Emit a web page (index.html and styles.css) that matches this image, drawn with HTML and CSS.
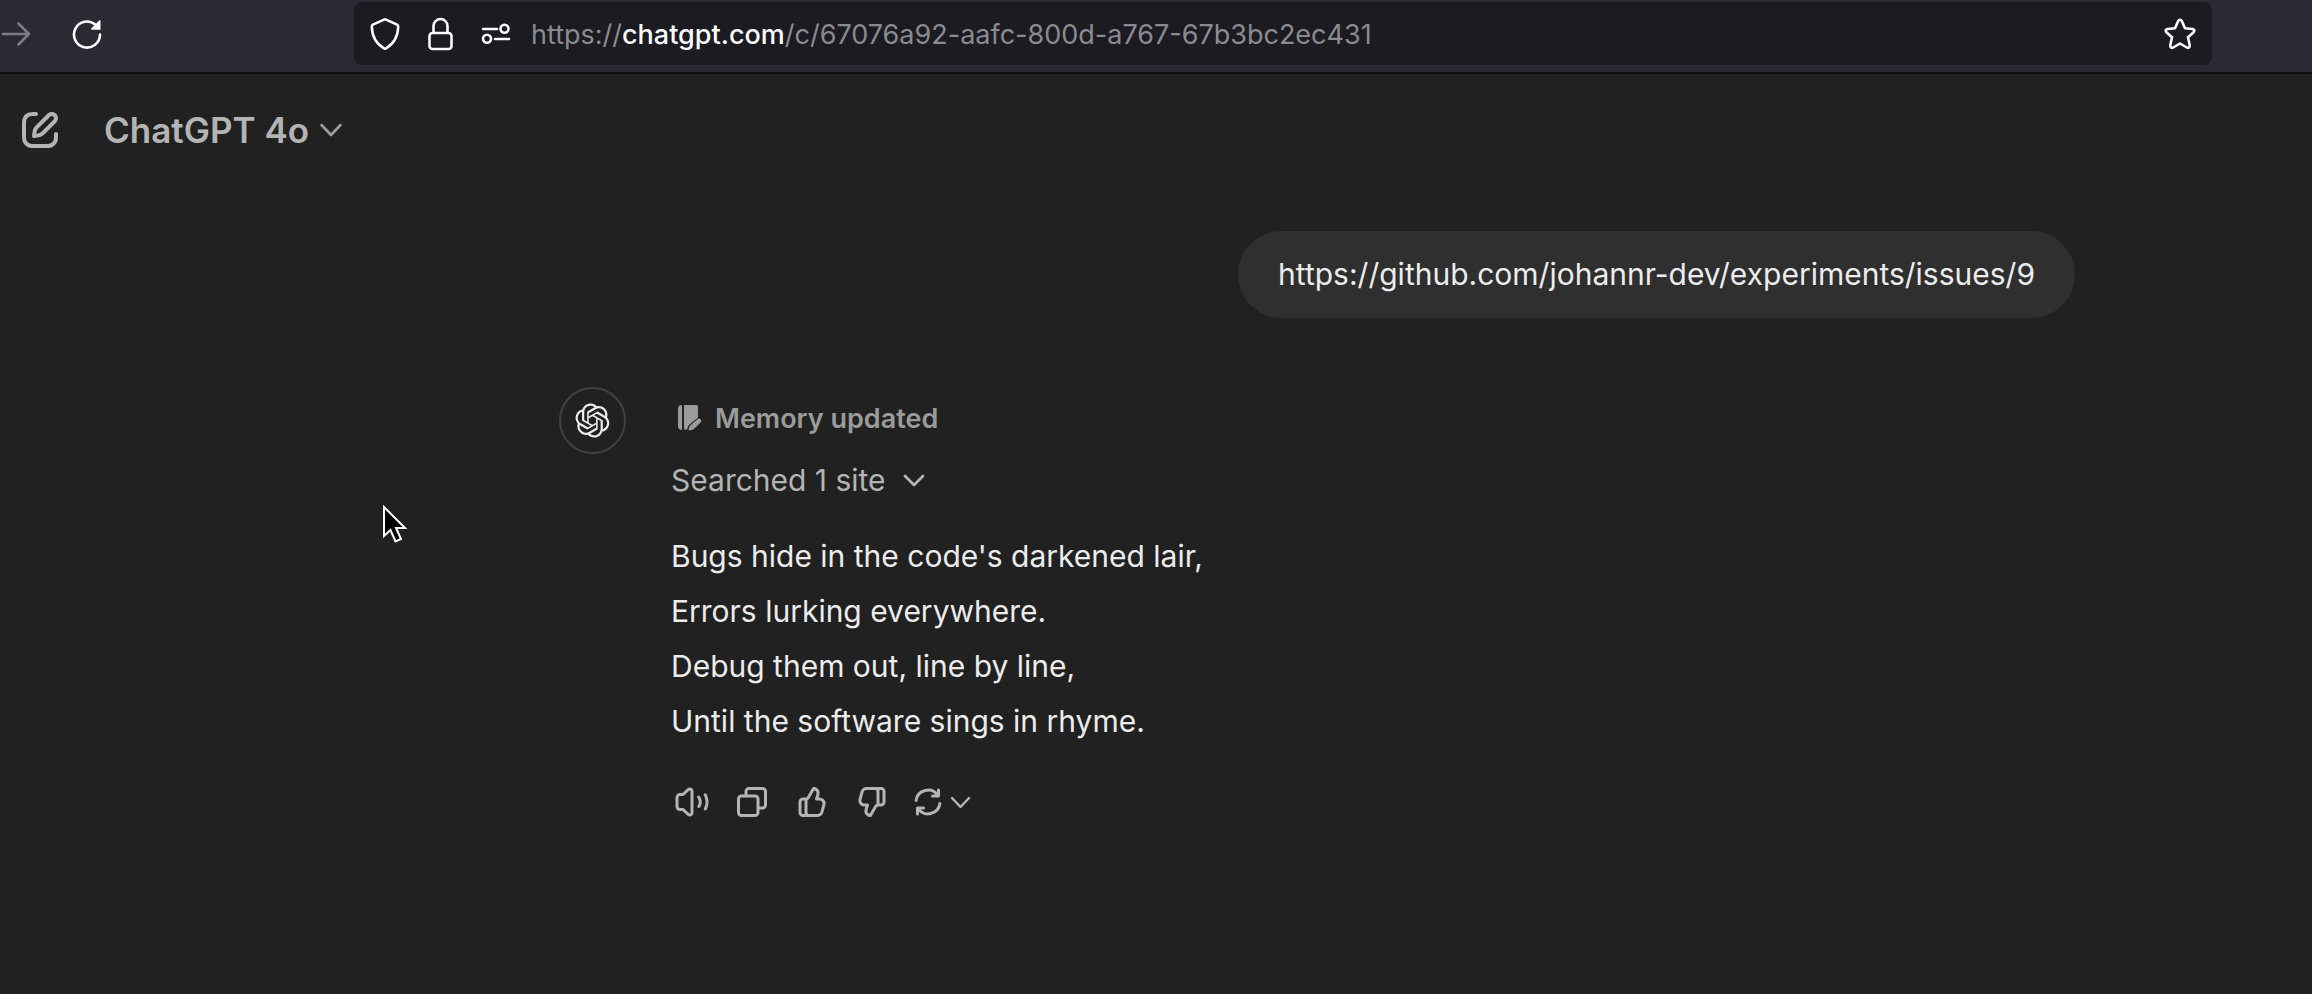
FILE: index.html
```html
<!DOCTYPE html>
<html lang="en">
<head>
<meta charset="utf-8">
<title>ChatGPT</title>
<link rel="stylesheet" href="styles.css">
</head>
<body>
<header class="toolbar">
  <div class="nav-buttons">
    <button class="icon-button forward" aria-label="Forward" disabled>
      <svg width="32" height="32" viewBox="0 0 32 32" fill="none" stroke="currentColor" stroke-width="2.6" stroke-linecap="round" stroke-linejoin="round"><path d="M3 16H29M18.500 5.500L29 16L18.500 26.500"/></svg>
    </button>
    <button class="icon-button" aria-label="Reload">
      <svg width="32" height="32" viewBox="0 0 32 32" fill="none"><path d="M28 16.500A13 13 0 1 1 23.500 6.700" stroke="currentColor" stroke-width="2.600" stroke-linecap="round"/><path d="M28.500 2.500V11.800H19.500Q18.500 11.500 19.200 10.600L27.200 2.500Q28 1.800 28.500 2.500Z" fill="currentColor"/></svg>
    </button>
  </div>
  <div class="address-bar">
    <button class="icon-button" aria-label="Tracking protection">
      <svg width="32" height="34" viewBox="0 0 32 34" fill="none" stroke="currentColor" stroke-width="2.600" stroke-linejoin="round"><path d="M15 2.600Q16 2 17 2.600L28 7.600Q29.300 8.200 29.200 9.800C29 19 26 26 17 31.400Q16 32 15 31.400C6 26 3 19 2.800 9.800Q2.700 8.200 4 7.600Z"/></svg>
    </button>
    <button class="icon-button" aria-label="Connection secure">
      <svg width="32" height="34" viewBox="0 0 32 34" fill="none" stroke="currentColor" stroke-width="2.600"><rect x="4.500" y="16" width="22" height="16" rx="3"/><path d="M8.500 16V9A7 7 0 0 1 22.500 9V16"/></svg>
    </button>
    <button class="icon-button" aria-label="Permissions">
      <svg width="32" height="34" viewBox="0 0 32 34" fill="none" stroke="currentColor" stroke-width="2.600" stroke-linecap="round"><path d="M2 12H16M14 22H28"/><circle cx="23.500" cy="11.800" r="4"/><circle cx="6" cy="21.800" r="4"/></svg>
    </button>
    <div class="url" role="textbox" aria-label="Address">https://<span class="url-host">chatgpt.com</span>/c/67076a92-aafc-800d-a767-67b3bc2ec431</div>
    <button class="icon-button" aria-label="Bookmark this page">
      <svg width="34" height="34" viewBox="0 0 34 34" fill="none" stroke="currentColor" stroke-width="2.600" stroke-linejoin="round"><path d="M15.200 4Q17 1.500 18.800 4L22 11.200L29.500 12Q32.500 12.800 30.600 15.200L25 20.300L26.700 28.200Q26.700 31.500 23.800 30.500L17 26.500L10.200 30.500Q7.300 31.500 7.300 28.200L9 20.300L3.400 15.200Q1.500 12.800 4.500 12L12 11.200Z"/></svg>
    </button>
  </div>
</header>

<div class="app-header">
  <button class="icon-button muted" aria-label="New chat">
    <svg width="48" height="48" viewBox="0 0 24 24" fill="currentColor" fill-rule="evenodd"><path d="M15.673 3.913C16.892 2.694 18.868 2.694 20.087 3.913C21.306 5.132 21.306 7.108 20.087 8.327L14.150 14.264C13.385 15.029 12.393 15.526 11.322 15.679L9.141 15.990C8.830 16.034 8.515 15.930 8.293 15.707C8.070 15.485 7.966 15.170 8.010 14.859L8.321 12.679C8.474 11.608 8.971 10.615 9.736 9.850L15.673 3.913ZM18.673 5.327C18.235 4.889 17.525 4.889 17.087 5.327L11.150 11.264C10.691 11.723 10.393 12.319 10.301 12.961L10.179 13.822L11.039 13.699C11.681 13.607 12.277 13.309 12.736 12.850L18.673 6.913C19.111 6.475 19.111 5.765 18.673 5.327ZM11 3.999C11 4.552 10.553 5 10.001 5C9.002 5.001 8.298 5.008 7.747 5.061C7.207 5.112 6.885 5.201 6.638 5.327C6.074 5.615 5.615 6.074 5.327 6.638C5.193 6.901 5.101 7.249 5.051 7.854C5.001 8.471 5 9.263 5 10.400V13.600C5 14.737 5.001 15.529 5.051 16.146C5.101 16.751 5.193 17.099 5.327 17.362C5.615 17.926 6.074 18.385 6.638 18.673C6.901 18.807 7.249 18.899 7.854 18.949C8.471 18.999 9.263 19 10.400 19H13.600C14.737 19 15.529 18.999 16.146 18.949C16.751 18.899 17.099 18.807 17.362 18.673C17.927 18.385 18.385 17.926 18.673 17.362C18.799 17.115 18.888 16.793 18.939 16.254C18.992 15.702 18.999 14.998 19 13.999C19 13.447 19.448 13 20.001 13C20.553 13 21 13.449 21 14.001C20.999 14.979 20.993 15.781 20.930 16.443C20.866 17.116 20.739 17.714 20.455 18.270C19.976 19.211 19.211 19.976 18.270 20.455C17.678 20.757 17.038 20.883 16.309 20.942C15.601 21 14.727 21 13.643 21H10.357C9.273 21 8.399 21 7.691 20.942C6.963 20.883 6.322 20.757 5.730 20.455C4.789 19.976 4.024 19.211 3.545 18.270C3.243 17.678 3.117 17.037 3.058 16.309C3 15.601 3 14.727 3 13.643V10.357C3 9.273 3 8.399 3.058 7.691C3.117 6.962 3.243 6.322 3.545 5.730C4.024 4.789 4.789 4.024 5.730 3.545C6.286 3.261 6.884 3.134 7.557 3.070C8.219 3.007 9.021 3.001 9.999 3C10.552 3 11 3.447 11 3.999Z"/></svg>
  </button>
  <button class="model-picker">ChatGPT 4o
    <svg class="dim" width="24" height="24" viewBox="0 0 24 24" fill="none" stroke="currentColor" stroke-width="2.600" stroke-linecap="round" stroke-linejoin="round"><path d="M2.500 7L12 17L21.500 7"/></svg>
  </button>
</div>

<main class="thread">
  <div class="user-message"><div class="bubble">https://github.com/johannr-dev/experiments/issues/9</div></div>

  <article class="reply">
    <div class="avatar">
      <svg width="35" height="35" viewBox="0 0 41 41" fill="currentColor"><path d="M37.5324 16.8707C37.9808 15.5241 38.1363 14.0974 37.9886 12.6859C37.8409 11.2744 37.3934 9.91076 36.676 8.68622C35.6126 6.83404 33.9882 5.3676 32.0373 4.4985C30.0864 3.62941 27.9098 3.40259 25.8215 3.85078C24.8796 2.7893 23.7219 1.94125 22.4257 1.36341C21.1295 0.785575 19.7249 0.491269 18.3058 0.500197C16.1708 0.495044 14.0893 1.16803 12.3614 2.42214C10.6335 3.67624 9.34853 5.44666 8.6917 7.47815C7.30085 7.76286 5.98686 8.3414 4.8377 9.17505C3.68854 10.0087 2.73073 11.0782 2.02839 12.312C0.956464 14.1591 0.498905 16.2988 0.721698 18.4228C0.944492 20.5467 1.83612 22.5449 3.268 24.1293C2.81966 25.4759 2.66413 26.9026 2.81182 28.3141C2.95951 29.7256 3.40701 31.0892 4.12437 32.3138C5.18791 34.1659 6.8123 35.6322 8.76321 36.5013C10.7141 37.3704 12.8907 37.5973 14.9789 37.1492C15.9208 38.2107 17.0786 39.0587 18.3747 39.6366C19.6709 40.2144 21.0755 40.5087 22.4946 40.4998C24.6307 40.5054 26.7133 39.8321 28.4418 38.5772C30.1704 37.3223 31.4556 35.5506 32.1119 33.5179C33.5027 33.2332 34.8167 32.6547 35.9659 31.821C37.115 30.9874 38.0728 29.9178 38.7752 28.684C39.8458 26.8371 40.3023 24.6979 40.0789 22.5748C39.8556 20.4517 38.9639 18.4544 37.5324 16.8707ZM22.4978 37.8849C20.7443 37.8874 19.0459 37.2733 17.6994 36.1501C17.7601 36.117 17.8666 36.0586 17.936 36.0161L25.9004 31.4156C26.1003 31.3019 26.2663 31.137 26.3813 30.9378C26.4964 30.7386 26.5563 30.5124 26.5549 30.2825V19.0542L29.9213 20.998C29.9389 21.0068 29.9541 21.0198 29.9656 21.0359C29.977 21.052 29.9842 21.0707 29.9867 21.0902V30.3889C29.9842 32.375 29.1946 34.2791 27.7909 35.6841C26.3872 37.0892 24.4838 37.8806 22.4978 37.8849ZM6.39227 31.0064C5.51397 29.4888 5.19742 27.7107 5.49804 25.9832C5.55718 26.0187 5.66048 26.0818 5.73461 26.1244L13.699 30.7248C13.8975 30.8408 14.1233 30.902 14.3532 30.902C14.583 30.902 14.8088 30.8408 15.0073 30.7248L24.731 25.1103V28.9979C24.7321 29.0177 24.7283 29.0376 24.7199 29.0556C24.7115 29.0736 24.6988 29.0893 24.6829 29.1012L16.6317 33.7497C14.9096 34.7416 12.8643 35.0097 10.9447 34.4954C9.02506 33.9811 7.38785 32.7263 6.39227 31.0064ZM4.29707 13.6194C5.17156 12.0998 6.55279 10.9364 8.19885 10.3327C8.19885 10.4013 8.19491 10.5228 8.19491 10.6071V19.808C8.19351 20.0378 8.25334 20.2638 8.36823 20.4629C8.48312 20.6619 8.64893 20.8267 8.84863 20.9404L18.5723 26.5542L15.206 28.4979C15.1894 28.5089 15.1703 28.5155 15.1505 28.5173C15.1307 28.5191 15.1107 28.516 15.0924 28.5082L7.04046 23.8557C5.32135 22.8601 4.06716 21.2235 3.55289 19.3046C3.03862 17.3858 3.30624 15.3413 4.29707 13.6194ZM31.955 20.0556L22.2312 14.4411L25.5976 12.4981C25.6142 12.4872 25.6333 12.4805 25.6531 12.4787C25.6729 12.4769 25.6928 12.4801 25.7111 12.4879L33.7631 17.1364C34.9967 17.849 36.0017 18.8982 36.6606 20.1613C37.3194 21.4244 37.6047 22.849 37.4832 24.2684C37.3617 25.6878 36.8382 27.0432 35.9743 28.1759C35.1103 29.3086 33.9415 30.1717 32.6047 30.6641C32.6047 30.5947 32.6047 30.4733 32.6047 30.3889V21.188C32.6066 20.9586 32.5474 20.7328 32.4332 20.5338C32.319 20.3348 32.154 20.1698 31.955 20.0556ZM35.3055 15.0128C35.2464 14.9765 35.1431 14.9142 35.069 14.8717L27.1045 10.2712C26.906 10.1554 26.6803 10.0943 26.4504 10.0943C26.2206 10.0943 25.9948 10.1554 25.7963 10.2712L16.0726 15.8858V11.9982C16.0715 11.9783 16.0753 11.9585 16.0837 11.9405C16.0921 11.9225 16.1048 11.9068 16.1207 11.8949L24.1719 7.25025C25.4053 6.53903 26.8158 6.19376 28.2383 6.25482C29.6608 6.31589 31.0364 6.78077 32.2044 7.59508C33.3723 8.40939 34.2842 9.53945 34.8334 10.8531C35.3826 12.1667 35.5464 13.6095 35.3055 15.0128ZM14.2424 21.9419L10.8752 19.9981C10.8576 19.9893 10.8423 19.9763 10.8309 19.9602C10.8195 19.9441 10.8122 19.9254 10.8098 19.9058V10.6071C10.8107 9.18295 11.2173 7.78848 11.9819 6.58696C12.7466 5.38544 13.8377 4.42659 15.1275 3.82264C16.4173 3.21869 17.8524 2.99464 19.2649 3.1767C20.6775 3.35876 22.0089 3.93941 23.1034 4.85067C23.0427 4.88379 22.937 4.94215 22.8668 4.98473L14.9024 9.58517C14.7025 9.69878 14.5366 9.86356 14.4215 10.0626C14.3065 10.2616 14.2466 10.4877 14.2479 10.7175L14.2424 21.9419ZM16.071 17.9991L20.4018 15.4978L24.7325 17.9975V22.9985L20.4018 25.4983L16.071 22.9985V17.9991Z"/></svg>
    </div>
    <div class="reply-body">
      <div class="memory">
        <svg width="26" height="28" viewBox="0 0 26 28" fill="currentColor"><path d="M5 1V26A4 4 0 0 1 1 22V5A4 4 0 0 1 5 1ZM7 1H19Q21 1 21 3V13.500L12.500 20.500Q10.500 22.500 10.300 25.500H7Z"/><path d="M20.300 15.200A2.300 2.300 0 0 1 23.600 18.600L18 24Q16 26 12 26.500Q11.500 26.500 11.600 25.500Q12 22.500 14.500 20.300Z"/></svg>
        Memory updated
      </div>
      <button class="searched">Searched 1 site
        <svg width="24" height="24" viewBox="0 0 24 24" fill="none" stroke="currentColor" stroke-width="2.800" stroke-linecap="round" stroke-linejoin="round"><path d="M3 8L12 17L21 8"/></svg>
      </button>
      <p class="poem">Bugs hide in the code's darkened lair,<br>Errors lurking everywhere.<br>Debug them out, line by line,<br>Until the software sings in rhyme.</p>
      <div class="actions">
        <button class="icon-button" aria-label="Read aloud">
          <svg width="36" height="36" viewBox="0 0 24 24" fill="currentColor" fill-rule="evenodd"><path d="M11 4.910C11 4.475 10.483 4.247 10.162 4.541L6.676 7.737C6.491 7.906 6.250 8 6 8H4C3.448 8 3 8.448 3 9V15C3 15.552 3.448 16 4 16H6C6.250 16 6.491 16.094 6.676 16.263L10.162 19.459C10.483 19.753 11 19.525 11 19.090V4.910ZM8.811 3.067C10.414 1.597 13 2.735 13 4.910V19.090C13 21.266 10.414 22.403 8.811 20.933L5.611 18H4C2.343 18 1 16.657 1 15V9C1 7.343 2.343 6 4 6H5.611L8.811 3.067ZM20.317 6.357C20.802 6.093 21.409 6.273 21.673 6.758C22.519 8.318 23 10.104 23 12C23 13.851 22.542 15.597 21.732 17.130C21.474 17.619 20.870 17.805 20.381 17.548C19.893 17.290 19.706 16.685 19.964 16.196C20.625 14.944 21 13.518 21 12C21 10.446 20.606 8.986 19.915 7.713C19.651 7.227 19.831 6.620 20.317 6.357ZM15.799 7.900C16.241 7.569 16.868 7.658 17.200 8.099C18.016 9.186 18.500 10.538 18.500 12C18.500 13.313 18.109 14.537 17.439 15.560C17.136 16.022 16.516 16.151 16.054 15.848C15.592 15.546 15.463 14.926 15.766 14.464C16.230 13.756 16.500 12.911 16.500 12C16.500 10.986 16.165 10.053 15.600 9.301C15.269 8.859 15.358 8.232 15.799 7.900Z"/></svg>
        </button>
        <button class="icon-button" aria-label="Copy">
          <svg width="36" height="36" viewBox="0 0 24 24" fill="currentColor" fill-rule="evenodd"><path d="M7 5C7 3.343 8.343 2 10 2H19C20.657 2 22 3.343 22 5V14C22 15.657 20.657 17 19 17H17V19C17 20.657 15.657 22 14 22H5C3.343 22 2 20.657 2 19V10C2 8.343 3.343 7 5 7H7V5ZM9 7H14C15.657 7 17 8.343 17 10V15H19C19.552 15 20 14.552 20 14V5C20 4.448 19.552 4 19 4H10C9.448 4 9 4.448 9 5V7ZM5 9C4.448 9 4 9.448 4 10V19C4 19.552 4.448 20 5 20H14C14.552 20 15 19.552 15 19V10C15 9.448 14.552 9 14 9H5Z"/></svg>
        </button>
        <button class="icon-button" aria-label="Good response">
          <svg width="36" height="36" viewBox="0 0 24 24" fill="currentColor" fill-rule="evenodd"><path id="thumb" d="M12.132 2.504C12.332 2.153 12.724 1.958 13.124 2.008L13.578 2.064C16.045 2.373 17.636 4.834 16.905 7.210L16.354 9H17.072C19.710 9 21.625 11.508 20.931 14.053L19.568 19.053C19.093 20.793 17.512 22 15.709 22H6C4.343 22 3 20.657 3 19V12C3 10.343 4.343 9 6 9H8C8.260 9 8.499 8.861 8.628 8.636L12.132 2.504ZM10 20H15.709C16.611 20 17.401 19.396 17.638 18.526L19.002 13.526C19.349 12.254 18.391 11 17.072 11H15C14.683 11 14.384 10.849 14.196 10.594C14.007 10.339 13.951 10.009 14.044 9.706L14.993 6.622C15.338 5.500 14.648 4.340 13.532 4.085L10.364 9.628C10.052 10.174 9.567 10.586 9 10.810V19C9 19.552 9.448 20 10 20ZM7 11V19C7 19.351 7.060 19.687 7.171 20H6C5.448 20 5 19.552 5 19V12C5 11.448 5.448 11 6 11H7Z"/></svg>
        </button>
        <button class="icon-button" aria-label="Bad response">
          <svg width="36" height="36" viewBox="0 0 24 24" fill="currentColor" fill-rule="evenodd"><use href="#thumb" transform="rotate(180 12 12)"/></svg>
        </button>
        <button class="icon-button regenerate" aria-label="Switch model">
          <svg width="28" height="36" viewBox="2.667 0 18.667 24" fill="none" stroke="currentColor" stroke-width="2" stroke-linecap="round" stroke-linejoin="round"><path d="M4.060 11A8 8 0 0 1 18.500 7.500M15 8H19V4M19.940 13A8 8 0 0 1 5.500 16.500M9 16H5V20"/></svg>
          <svg width="24" height="24" viewBox="0 0 24 24" fill="none" stroke="currentColor" stroke-width="2.400" stroke-linecap="round" stroke-linejoin="round"><path d="M4 8L12.500 17L21 8"/></svg>
        </button>
      </div>
    </div>
  </article>
</main>

<svg class="pointer" width="26" height="40" viewBox="0 0 26 40" aria-hidden="true"><path d="M2 2V31L8.500 25L13.500 36.500L19 34L14 23H23Z" fill="#000" stroke="#fff" stroke-width="2"/></svg>
</body>
</html>
```
FILE: styles.css
```css
* {
  box-sizing: border-box;
}

body {
  margin: 0;
  min-height: 100vh;
  background: #212121;
  color: #ececec;
  font-family: Inter, "Liberation Sans", sans-serif;
  font-size: 30px;
}

button {
  padding: 0;
  border: 0;
  background: none;
  color: inherit;
  font: inherit;
}

svg {
  display: block;
  flex: none;
}

.icon-button {
  display: flex;
  align-items: center;
}

/* Browser toolbar */
.toolbar {
  display: flex;
  height: 74px;
  padding: 2px 100px 0 0;
  border-bottom: 2px solid #0c0c0d;
  background: #2b2a33;
  color: #fbfbfe;
}

.nav-buttons {
  display: flex;
  align-items: center;
  gap: 40px;
  width: 354px;
  height: 63px;
}

.forward {
  color: #7d7c82;
}

.address-bar {
  display: flex;
  flex: 1;
  align-items: center;
  gap: 24px;
  height: 63px;
  padding: 0 15px;
  border-radius: 8px;
  background: #1c1b22;
}

.url {
  flex: 1;
  margin-left: -6px;
  padding-top: 2px;
  color: #8b8a90;
  font-size: 27px;
  white-space: nowrap;
}

.url-host {
  color: #fbfbfe;
  font-weight: 500;
}

/* Page header */
.app-header {
  display: flex;
  align-items: center;
  gap: 40px;
  height: 112px;
  padding: 0 16px;
}

.muted {
  color: #b4b4b4;
}

.model-picker {
  display: flex;
  align-items: center;
  gap: 10px;
  color: #b4b4b4;
  font-size: 35px;
  font-weight: 600;
}

.dim {
  color: #9b9b9b;
}

/* Conversation */
.thread {
  padding: 45px 237px 40px 559px;
}

.user-message {
  display: flex;
  justify-content: flex-end;
}

.bubble {
  padding: 16px 40px;
  border-radius: 44px;
  background: #2f2f2f;
  line-height: 55px;
}

.reply {
  display: flex;
  gap: 45px;
  margin-top: 69px;
}

.avatar {
  display: flex;
  flex: none;
  align-items: center;
  justify-content: center;
  width: 67px;
  height: 67px;
  border: 2px solid #414141;
  border-radius: 50%;
}

.memory {
  display: flex;
  align-items: center;
  gap: 12px;
  height: 62px;
  padding-left: 6px;
  color: #9b9b9b;
  font-size: 27px;
  font-weight: 600;
}

.searched {
  display: flex;
  align-items: center;
  gap: 16px;
  height: 62px;
  color: #b4b4b4;
}

.poem {
  margin: 18px 0 0;
  line-height: 55px;
}

.actions {
  display: flex;
  gap: 24px;
  padding: 35px 0 0 3px;
  color: #b4b4b4;
}

.regenerate {
  gap: 6px;
}

/* Mouse pointer over the page */
.pointer {
  position: absolute;
  top: 505px;
  left: 382px;
}
```
